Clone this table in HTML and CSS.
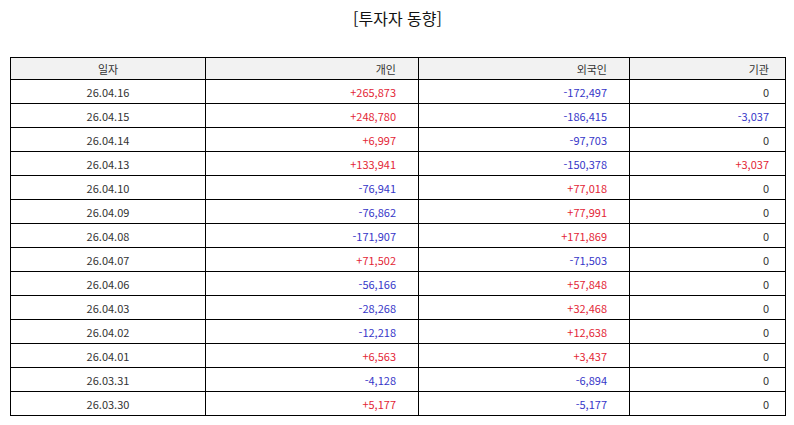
FILE: index.html
```html
<!DOCTYPE html>
<html lang="ko">
<head>
<meta charset="utf-8">
<title>투자자 동향</title>
<link rel="stylesheet" href="styles.css">
</head>
<body>
<div class="page">
  <h1 class="title">[투자자 동향]</h1>
  <table class="grid">
    <colgroup>
      <col class="c1"><col class="c2"><col class="c3"><col class="c4">
    </colgroup>
    <thead>
      <tr><th class="date">일자</th><th class="num p2">개인</th><th class="num p3">외국인</th><th class="num p4">기관</th></tr>
    </thead>
    <tbody>
      <tr><td class="date">26.04.16</td><td class="num p2 up">+265,873</td><td class="num p3 down">-172,497</td><td class="num p4">0</td></tr>
      <tr><td class="date">26.04.15</td><td class="num p2 up">+248,780</td><td class="num p3 down">-186,415</td><td class="num p4 down">-3,037</td></tr>
      <tr><td class="date">26.04.14</td><td class="num p2 up">+6,997</td><td class="num p3 down">-97,703</td><td class="num p4">0</td></tr>
      <tr><td class="date">26.04.13</td><td class="num p2 up">+133,941</td><td class="num p3 down">-150,378</td><td class="num p4 up">+3,037</td></tr>
      <tr><td class="date">26.04.10</td><td class="num p2 down">-76,941</td><td class="num p3 up">+77,018</td><td class="num p4">0</td></tr>
      <tr><td class="date">26.04.09</td><td class="num p2 down">-76,862</td><td class="num p3 up">+77,991</td><td class="num p4">0</td></tr>
      <tr><td class="date">26.04.08</td><td class="num p2 down">-171,907</td><td class="num p3 up">+171,869</td><td class="num p4">0</td></tr>
      <tr><td class="date">26.04.07</td><td class="num p2 up">+71,502</td><td class="num p3 down">-71,503</td><td class="num p4">0</td></tr>
      <tr><td class="date">26.04.06</td><td class="num p2 down">-56,166</td><td class="num p3 up">+57,848</td><td class="num p4">0</td></tr>
      <tr><td class="date">26.04.03</td><td class="num p2 down">-28,268</td><td class="num p3 up">+32,468</td><td class="num p4">0</td></tr>
      <tr><td class="date">26.04.02</td><td class="num p2 down">-12,218</td><td class="num p3 up">+12,638</td><td class="num p4">0</td></tr>
      <tr><td class="date">26.04.01</td><td class="num p2 up">+6,563</td><td class="num p3 up">+3,437</td><td class="num p4">0</td></tr>
      <tr><td class="date">26.03.31</td><td class="num p2 down">-4,128</td><td class="num p3 down">-6,894</td><td class="num p4">0</td></tr>
      <tr><td class="date">26.03.30</td><td class="num p2 up">+5,177</td><td class="num p3 down">-5,177</td><td class="num p4">0</td></tr>
    </tbody>
  </table>
</div>
</body>
</html>
```
FILE: styles.css
```css
html, body {
  margin: 0;
  padding: 0;
  background: #ffffff;
}
body {
  font-family: "Noto Sans CJK KR", "Noto Sans", "Liberation Sans", sans-serif;
  color: #333333;
}
.page {
  width: 794px;
  padding: 0 9px 0 10px;
  box-sizing: border-box;
}
.title {
  margin: 0;
  padding-top: 6px;
  height: 57px;
  box-sizing: border-box;
  text-align: center;
  font-size: 16px;
  font-weight: normal;
  line-height: 24px;
  color: #111111;
}
.grid {
  width: 775px;
  border-collapse: collapse;
  table-layout: fixed;
  font-size: 11px;
}
.c1 { width: 195px; }
.c2 { width: 213px; }
.c3 { width: 211px; }
.c4 { width: 156px; }
.grid th,
.grid td {
  border: 1px solid #000000;
  height: 23px;
  padding: 0;
  font-weight: normal;
  line-height: 14px;
  white-space: nowrap;
}
.grid thead th {
  background: #f2f2f2;
  height: 21px;
  color: #333333;
}
.date { text-align: center; }
.num { text-align: right; }
.p2, .p3 { padding-right: 22px !important; }
.p4 { padding-right: 16px !important; }
.up { color: #e32636; }
.down { color: #3636c8; }
```
